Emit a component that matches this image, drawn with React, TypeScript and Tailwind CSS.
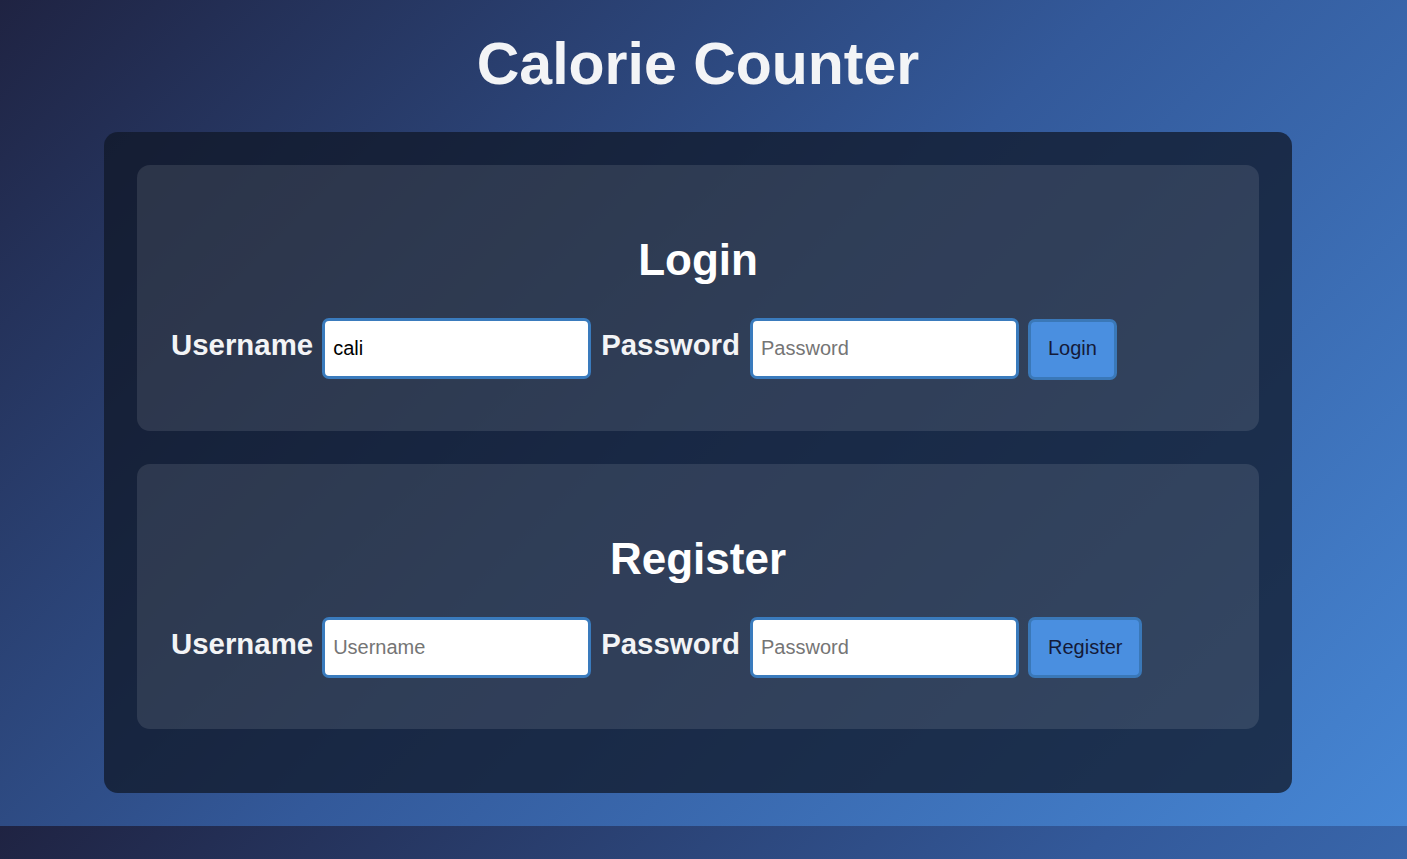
import React, { useState } from 'react';

// One auth panel: heading plus a single row of label / input pairs and a button
interface AuthPanelProps {
    title: string;
    action: string;
    defaultUser?: string;
}

const AuthPanel: React.FC<AuthPanelProps> = ({ title, action, defaultUser = '' }) => {
    const [username, setUsername] = useState(defaultUser);
    const [password, setPassword] = useState('');

    return (
        <section className="rounded-[13px] bg-white/10 px-[34px] pt-[69px] pb-[51px]">
            <h2 className="mb-[33px] text-center text-[44px] font-bold leading-[51px] text-white">{title}</h2>
            <form className="flex items-baseline" onSubmit={(e) => e.preventDefault()}>
                <label className="mr-[9px] text-[29.4px] font-bold text-gray-100">Username</label>
                <input
                    value={username}
                    onChange={(e) => setUsername(e.target.value)}
                    placeholder="Username"
                    className="h-[61px] w-[269px] rounded-[7px] border-[3px] border-[#3a7bbd] bg-white px-[8px] text-[20px] text-black placeholder:text-[#757575] focus:outline-none"
                />
                <label className="ml-[10px] mr-[10px] text-[29.4px] font-bold text-gray-100">Password</label>
                <input
                    type="password"
                    value={password}
                    onChange={(e) => setPassword(e.target.value)}
                    placeholder="Password"
                    className="h-[61px] w-[269px] rounded-[7px] border-[3px] border-[#3a7bbd] bg-white px-[8px] text-[20px] text-black placeholder:text-[#757575] focus:outline-none"
                />
                <button
                    type="submit"
                    className="ml-[9px] h-[61px] rounded-[7px] border-[3px] border-[#3a78b8] bg-[#4a8fe0] px-[17px] pb-[2px] text-[20px] text-[#141a38] hover:bg-[#3f82d2]"
                >
                    {action}
                </button>
            </form>
        </section>
    );
};

export default function App() {
    return (
        <div
            className="h-[859px] w-full overflow-hidden bg-[linear-gradient(135deg,#1f2342_0%,#33599a_50%,#4686d4_100%)] bg-[length:100%_826px] bg-repeat"
            style={{ fontFamily: '"Liberation Sans", Arial, sans-serif' }}
        >
            <div className="w-[1396px] pt-[30px]">
                <h1 className="mb-[34px] text-center text-[59px] font-bold leading-[68px] text-gray-100">Calorie Counter</h1>
                <main className="mx-auto flex w-[1188px] flex-col gap-[33px] rounded-[14px] bg-gray-900/75 px-[33px] pt-[33px] pb-[64px]">
                    <AuthPanel title="Login" action="Login" defaultUser="cali" />
                    <AuthPanel title="Register" action="Register" />
                </main>
            </div>
        </div>
    );
}
